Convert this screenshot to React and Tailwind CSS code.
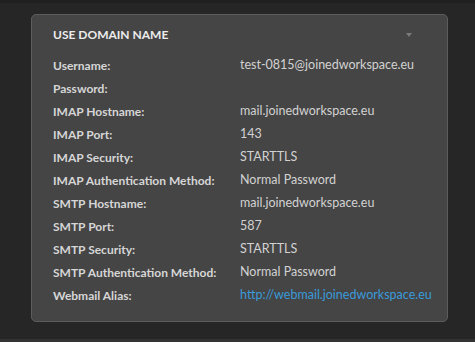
const ROWS = [
  ['Username:', 'test-0815@joinedworkspace.eu'],
  ['Password:', ''],
  ['IMAP Hostname:', 'mail.joinedworkspace.eu'],
  ['IMAP Port:', '143'],
  ['IMAP Security:', 'STARTTLS'],
  ['IMAP Authentication Method:', 'Normal Password'],
  ['SMTP Hostname:', 'mail.joinedworkspace.eu'],
  ['SMTP Port:', '587'],
  ['SMTP Security:', 'STARTTLS'],
  ['SMTP Authentication Method:', 'Normal Password'],
  ['Webmail Alias:', 'http://webmail.joinedworkspace.eu', true],
]

export default function App() {
  return (
    <div className="w-[475px] h-[342px] bg-[#262626] border-t-[3px] border-t-[#202020] border-b-[3px] border-b-[#333333] font-['Lato',sans-serif] overflow-hidden">
      <div className="ml-[31px] mt-[11px] w-[417px] h-[308px] rounded-[5px] border border-[#5c5c5c] bg-[#454545] pl-[21px] pr-[34px]">
        <div className="flex items-center justify-between h-[40px]">
          <h2 className="text-[12px] font-bold text-[#ececec]">USE DOMAIN NAME</h2>
          <span className="w-0 h-0 border-l-[3px] border-r-[3px] border-t-[4px] border-l-transparent border-r-transparent border-t-[#7a7a7a] mr-[1px]" />
        </div>
        <div className="flex flex-col -mt-[1px]">
          {ROWS.map(([label, val, link]) => (
            <div key={label} className="flex items-center h-[23px] whitespace-nowrap">
              <span className="w-[187px] shrink-0 text-[12px] font-bold text-[#d6d6d6]">{label}</span>
              <span className={'text-[12.5px] ' + (link ? 'text-[#3a9ad9]' : 'text-[#d2d2d2]')}>{val}</span>
            </div>
          ))}
        </div>
      </div>
    </div>
  )
}
